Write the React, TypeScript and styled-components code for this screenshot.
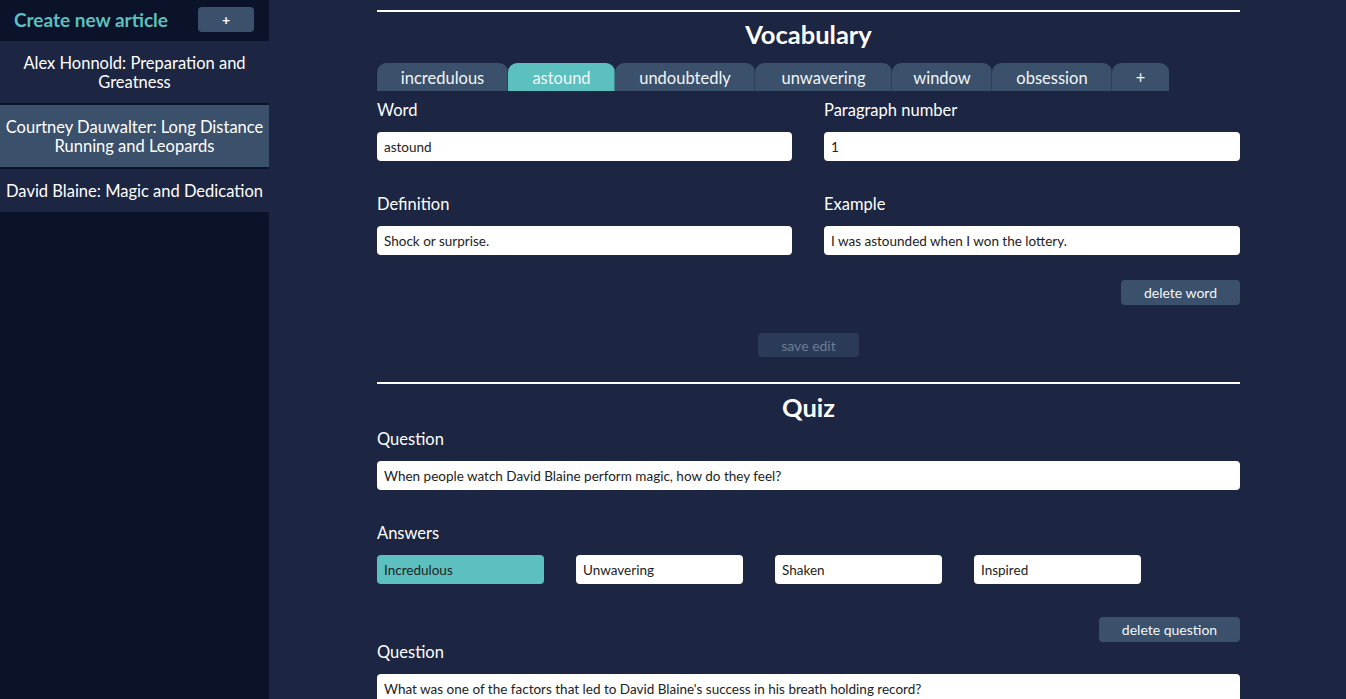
import React from "react";
import styled, { createGlobalStyle } from "styled-components";

const Global = createGlobalStyle`
  html, body { margin: 0; padding: 0; height: 100%; overflow: hidden; }
  body { font-family: Lato, "Open Sans", sans-serif; background: #1c2541; }
  * { box-sizing: border-box; }
`;

const Layout = styled.div`
  display: flex;
  height: 100vh;
  width: 100vw;
`;

const Sidebar = styled.aside`
  width: 269px;
  flex: 0 0 269px;
  background: #0b132b;
  display: flex;
  flex-direction: column;
  gap: 2px;
`;

const SideHeader = styled.div`
  height: 39px;
  display: flex;
  align-items: center;
  padding-left: 14px;
  gap: 30px;
`;

const SideTitle = styled.h2`
  margin: 0;
  color: #5bc0be;
  font-size: 19px;
  font-weight: 700;
  line-height: 24px;
`;

const AddButton = styled.button`
  width: 56px;
  height: 25px;
  border: none;
  border-radius: 4px;
  background: #3a506b;
  color: #fff;
  font-family: inherit;
  font-size: 14px;
  font-weight: 700;
  padding: 0;
`;

const ArticleItem = styled.div<{ $active?: boolean }>`
  background: ${(p) => (p.$active ? "#3a506b" : "#1c2541")};
  color: #fff;
  font-size: 16.5px;
  line-height: 19px;
  text-align: center;
  white-space: nowrap;
  padding: 13px 0 11px;
`;

const Main = styled.main`
  flex: 1;
  overflow: hidden;
  display: flex;
  justify-content: center;
`;

const Content = styled.div`
  width: 863px;
  margin-left: 2px;
  padding-top: 10px;
  display: flex;
  flex-direction: column;
`;

const Rule = styled.div<{ $top?: number }>`
  margin-top: ${(p) => p.$top ?? 0}px;
  height: 2px;
  width: 100%;
  background: #ffffff;
  flex-shrink: 0;
`;

const SectionTitle = styled.h1<{ $mt: number; $mb: number }>`
  margin: ${(p) => p.$mt}px 0 ${(p) => p.$mb}px;
  color: #fff;
  font-size: 25.5px;
  line-height: 30px;
  font-weight: 700;
  text-align: center;
`;

const Tabs = styled.div`
  display: flex;
  height: 28px;
`;

const Tab = styled.div<{ $active?: boolean; $w: number }>`
  width: ${(p) => p.$w}px;
  height: 28px;
  border-radius: 9px 9px 0 0;
  background: ${(p) => (p.$active ? "#5bc0be" : "#3a506b")};
  color: #f2f5f8;
  font-size: 16.5px;
  line-height: 30px;
  text-align: center;
  box-shadow: -1px 0 0 rgba(20, 30, 55, 0.35);
`;

const Grid = styled.div<{ $mt: number }>`
  display: grid;
  grid-template-columns: 415px 416px;
  column-gap: 32px;
  row-gap: 33px;
  margin-top: ${(p) => p.$mt}px;
`;

const Field = styled.label<{ $mt?: number }>`
  display: flex;
  flex-direction: column;
  gap: 12px;
  margin-top: ${(p) => p.$mt ?? 0}px;
`;

const Label = styled.span`
  color: #fff;
  font-size: 16.5px;
  line-height: 20px;
`;

const Input = styled.input<{ $w?: number; $sel?: boolean }>`
  height: 29px;
  width: ${(p) => (p.$w ? `${p.$w}px` : "100%")};
  border: none;
  border-radius: 4px;
  background: ${(p) => (p.$sel ? "#5bc0be" : "#fff")};
  color: #222;
  font-family: Lato, sans-serif;
  font-size: 13.5px;
  padding: 0 7px;
  outline: none;
`;

const ButtonRow = styled.div<{ $mt: number; $center?: boolean }>`
  display: flex;
  justify-content: ${(p) => (p.$center ? "center" : "flex-end")};
  margin-top: ${(p) => p.$mt}px;
`;

const ActionButton = styled.button<{ $w: number; $disabled?: boolean }>`
  width: ${(p) => p.$w}px;
  height: ${(p) => (p.$disabled ? 24 : 25)}px;
  border: none;
  border-radius: 4px;
  background: ${(p) => (p.$disabled ? "#2a3a57" : "#3a506b")};
  color: ${(p) => (p.$disabled ? "#6d7c93" : "#f4f6fa")};
  font-family: Lato, sans-serif;
  font-size: 14px;
  padding: 0;
`;

const Answers = styled.div`
  display: flex;
  gap: 32px;
`;

const tabs = [
  { t: "incredulous", w: 131 },
  { t: "astound", w: 107, a: true },
  { t: "undoubtedly", w: 140 },
  { t: "unwavering", w: 137 },
  { t: "window", w: 100 },
  { t: "obsession", w: 120 },
  { t: "+", w: 57 },
];

export default function App() {
  return (
    <>
      <Global />
      <Layout>
        <Sidebar>
          <SideHeader>
            <SideTitle>Create new article</SideTitle>
            <AddButton>+</AddButton>
          </SideHeader>
          <ArticleItem>
            Alex Honnold: Preparation and
            <br />
            Greatness
          </ArticleItem>
          <ArticleItem $active>
            Courtney Dauwalter: Long Distance
            <br />
            Running and Leopards
          </ArticleItem>
          <ArticleItem>David Blaine: Magic and Dedication</ArticleItem>
        </Sidebar>
        <Main>
          <Content>
            <Rule />
            <SectionTitle $mt={7} $mb={14}>
              Vocabulary
            </SectionTitle>
            <Tabs>
              {tabs.map((x) => (
                <Tab key={x.t} $w={x.w} $active={x.a}>
                  {x.t}
                </Tab>
              ))}
            </Tabs>
            <Grid $mt={9}>
              <Field>
                <Label>Word</Label>
                <Input defaultValue="astound" />
              </Field>
              <Field>
                <Label>Paragraph number</Label>
                <Input defaultValue="1" />
              </Field>
              <Field>
                <Label>Definition</Label>
                <Input defaultValue="Shock or surprise." />
              </Field>
              <Field>
                <Label>Example</Label>
                <Input defaultValue="I was astounded when I won the lottery." />
              </Field>
            </Grid>
            <ButtonRow $mt={25}>
              <ActionButton $w={119}>delete word</ActionButton>
            </ButtonRow>
            <ButtonRow $mt={28} $center>
              <ActionButton $w={101} $disabled>
                save edit
              </ActionButton>
            </ButtonRow>
            <Rule $top={25} />
            <SectionTitle $mt={8} $mb={7}>
              Quiz
            </SectionTitle>
            <Field>
              <Label>Question</Label>
              <Input defaultValue="When people watch David Blaine perform magic, how do they feel?" />
            </Field>
            <Field $mt={33}>
              <Label>Answers</Label>
              <Answers>
                <Input $w={167} $sel defaultValue="Incredulous" />
                <Input $w={167} defaultValue="Unwavering" />
                <Input $w={167} defaultValue="Shaken" />
                <Input $w={167} defaultValue="Inspired" />
              </Answers>
            </Field>
            <ButtonRow $mt={33}>
              <ActionButton $w={141}>delete question</ActionButton>
            </ButtonRow>
            <Field>
              <Label>Question</Label>
              <Input defaultValue="What was one of the factors that led to David Blaine's success in his breath holding record?" />
            </Field>
          </Content>
        </Main>
      </Layout>
    </>
  );
}
